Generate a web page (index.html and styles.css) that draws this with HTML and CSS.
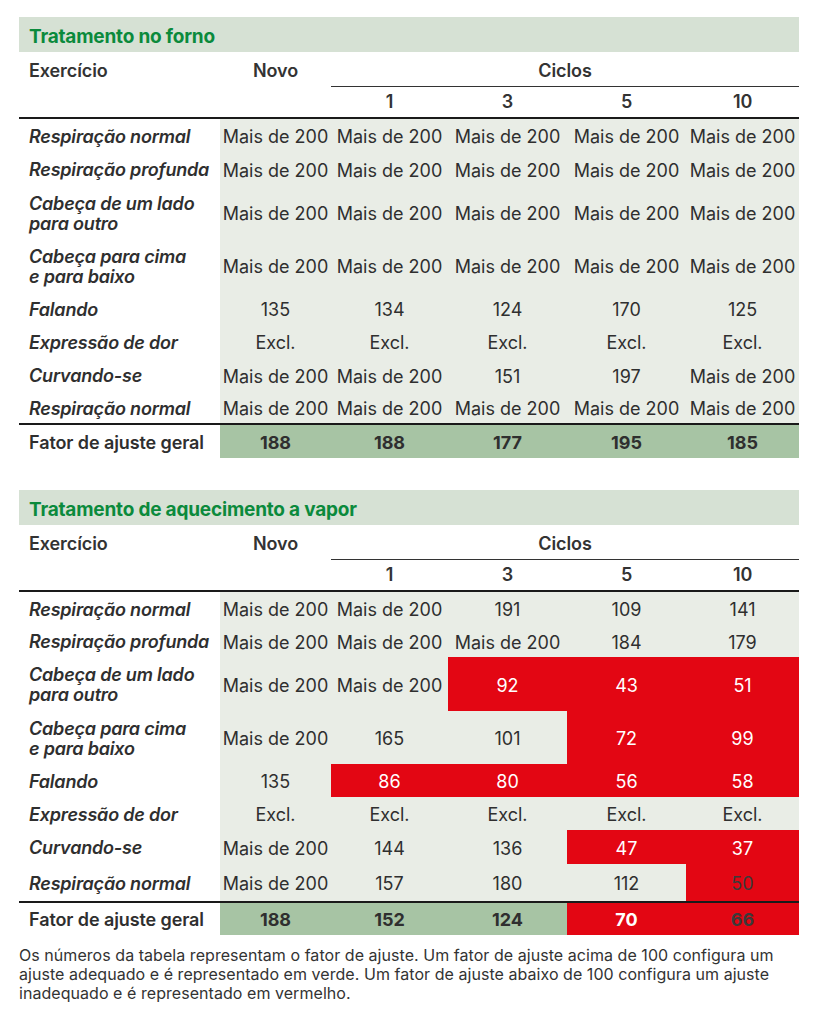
FILE: index.html
```html
<!DOCTYPE html>
<html lang="pt">
<head>
<meta charset="utf-8">
<link rel="stylesheet" href="styles.css">
</head>
<body>
<div class="page">
  <section class="block">
    <h2 class="title">Tratamento no forno</h2>
    <table class="tbl">
      <colgroup><col class="c0"><col class="c1"><col class="c2"><col class="c3"><col class="c4"><col class="c5"></colgroup>
      <thead>
        <tr class="h1"><th class="lbl">Exercício</th><th>Novo</th><th colspan="4" class="ciclos">Ciclos</th></tr>
        <tr class="h2"><th></th><th></th><th>1</th><th>3</th><th>5</th><th>10</th></tr>
      </thead>
      <tbody>
        <tr class="r34"><td class="lbl">Respiração normal</td><td>Mais de 200</td><td>Mais de 200</td><td>Mais de 200</td><td>Mais de 200</td><td>Mais de 200</td></tr>
        <tr class="r34"><td class="lbl">Respiração profunda</td><td>Mais de 200</td><td>Mais de 200</td><td>Mais de 200</td><td>Mais de 200</td><td>Mais de 200</td></tr>
        <tr class="r53"><td class="lbl">Cabeça de um lado<br>para outro</td><td>Mais de 200</td><td>Mais de 200</td><td>Mais de 200</td><td>Mais de 200</td><td>Mais de 200</td></tr>
        <tr class="r53"><td class="lbl">Cabeça para cima<br>e para baixo</td><td>Mais de 200</td><td>Mais de 200</td><td>Mais de 200</td><td>Mais de 200</td><td>Mais de 200</td></tr>
        <tr class="r33"><td class="lbl">Falando</td><td>135</td><td>134</td><td>124</td><td>170</td><td>125</td></tr>
        <tr class="r33"><td class="lbl">Expressão de dor</td><td>Excl.</td><td>Excl.</td><td>Excl.</td><td>Excl.</td><td>Excl.</td></tr>
        <tr class="r34"><td class="lbl">Curvando-se</td><td>Mais de 200</td><td>Mais de 200</td><td>151</td><td>197</td><td>Mais de 200</td></tr>
        <tr class="r32"><td class="lbl">Respiração normal</td><td>Mais de 200</td><td>Mais de 200</td><td>Mais de 200</td><td>Mais de 200</td><td>Mais de 200</td></tr>
      </tbody>
      <tfoot>
        <tr class="fator"><td class="lbl">Fator de ajuste geral</td><td class="g">188</td><td class="g">188</td><td class="g">177</td><td class="g">195</td><td class="g">185</td></tr>
      </tfoot>
    </table>
  </section>

  <section class="block second">
    <h2 class="title">Tratamento de aquecimento a vapor</h2>
    <table class="tbl">
      <colgroup><col class="c0"><col class="c1"><col class="c2"><col class="c3"><col class="c4"><col class="c5"></colgroup>
      <thead>
        <tr class="h1"><th class="lbl">Exercício</th><th>Novo</th><th colspan="4" class="ciclos">Ciclos</th></tr>
        <tr class="h2"><th></th><th></th><th>1</th><th>3</th><th>5</th><th>10</th></tr>
      </thead>
      <tbody>
        <tr class="r34"><td class="lbl">Respiração normal</td><td>Mais de 200</td><td>Mais de 200</td><td>191</td><td>109</td><td>141</td></tr>
        <tr class="r32"><td class="lbl">Respiração profunda</td><td>Mais de 200</td><td>Mais de 200</td><td>Mais de 200</td><td>184</td><td>179</td></tr>
        <tr class="r54"><td class="lbl">Cabeça de um lado<br>para outro</td><td>Mais de 200</td><td>Mais de 200</td><td class="red">92</td><td class="red">43</td><td class="red">51</td></tr>
        <tr class="r53"><td class="lbl">Cabeça para cima<br>e para baixo</td><td>Mais de 200</td><td>165</td><td>101</td><td class="red">72</td><td class="red">99</td></tr>
        <tr class="r33"><td class="lbl">Falando</td><td>135</td><td class="red">86</td><td class="red">80</td><td class="red">56</td><td class="red">58</td></tr>
        <tr class="r33"><td class="lbl">Expressão de dor</td><td>Excl.</td><td>Excl.</td><td>Excl.</td><td>Excl.</td><td>Excl.</td></tr>
        <tr class="r34"><td class="lbl">Curvando-se</td><td>Mais de 200</td><td>144</td><td>136</td><td class="red">47</td><td class="red">37</td></tr>
        <tr class="r38"><td class="lbl">Respiração normal</td><td>Mais de 200</td><td>157</td><td>180</td><td>112</td><td class="red dark">50</td></tr>
      </tbody>
      <tfoot>
        <tr class="fator f2"><td class="lbl">Fator de ajuste geral</td><td class="g">188</td><td class="g">152</td><td class="g">124</td><td class="red">70</td><td class="red dark">66</td></tr>
      </tfoot>
    </table>
    <p class="note">Os números da tabela representam o fator de ajuste. Um fator de ajuste acima de 100 configura um<br>ajuste adequado e é representado em verde. Um fator de ajuste abaixo de 100 configura um ajuste<br>inadequado e é representado em vermelho.</p>
  </section>
</div>
</body>
</html>
```
FILE: styles.css
```css
* { box-sizing: border-box; }
html, body { margin: 0; padding: 0; background: #ffffff; }
body {
  font-family: "Inter", "Lato", "Liberation Sans", sans-serif;
  color: #2f2f2f;
}
.page {
  width: 818px;
  padding: 17px 19px 0 19px;
}
.block { width: 780px; }
.second { margin-top: 32px; }
.title {
  margin: 0;
  height: 35px;
  background: #d6e1d4;
  color: #0b8a3c;
  font-size: 19px;
  font-weight: 700;
  line-height: 39px;
  padding-left: 10px;
  letter-spacing: -0.2px;
}
.tbl {
  width: 780px;
  table-layout: fixed;
  border-collapse: collapse;
  border-spacing: 0;
  font-size: 18px;
  letter-spacing: 0;
}
.c0 { width: 201px; }
.c1 { width: 111px; }
.c2 { width: 117px; }
.c3 { width: 119px; }
.c4 { width: 119px; }
.c5 { width: 113px; }
.tbl th, .tbl td {
  padding: 0;
  text-align: center;
  vertical-align: middle;
  white-space: nowrap;
}
.tbl th { font-weight: 600; color: #333; letter-spacing: -0.1px; }
.tbl .lbl { text-align: left; padding-left: 10px; }
.h1 th { height: 34px; padding-top: 3px; }
.h1 th.ciclos { border-bottom: 1px solid #333; }
.h2 th { height: 32px; border-bottom: 2px solid #1a1a1a; }
.tbl tbody td { background: #e9ede6; font-weight: 400; padding-top: 2px; }
.tbl tbody td.lbl {
  background: #ffffff;
  font-style: italic;
  font-weight: 600;
  line-height: 20px;
  color: #2f2f2f;
  letter-spacing: -0.2px;
}
.r32 td { height: 32px; }
.r33 td { height: 33px; }
.r34 td { height: 34px; }
.r38 td { height: 38px; }
.r53 td { height: 53px; }
.r54 td { height: 54px; }
.tbl tbody tr:last-child td { border-bottom: 2px solid #1a1a1a; }
.fator td { height: 34px; font-weight: 700; padding-top: 1px; }
.f2 td { height: 33px; }
.fator td.lbl { background: #ffffff; font-weight: 600; letter-spacing: -0.1px; }
.tbl td.g { background: #a7c4a4; }
.tbl td.red { background: #e30613; color: #ffffff; }
.tbl td.red.dark { color: #3a3a3a; }
.note {
  margin: 11px 0 0 0;
  font-size: 16px;
  line-height: 19px;
  color: #333;
  width: 790px;
  white-space: nowrap;
  letter-spacing: 0.05px;
}
```
